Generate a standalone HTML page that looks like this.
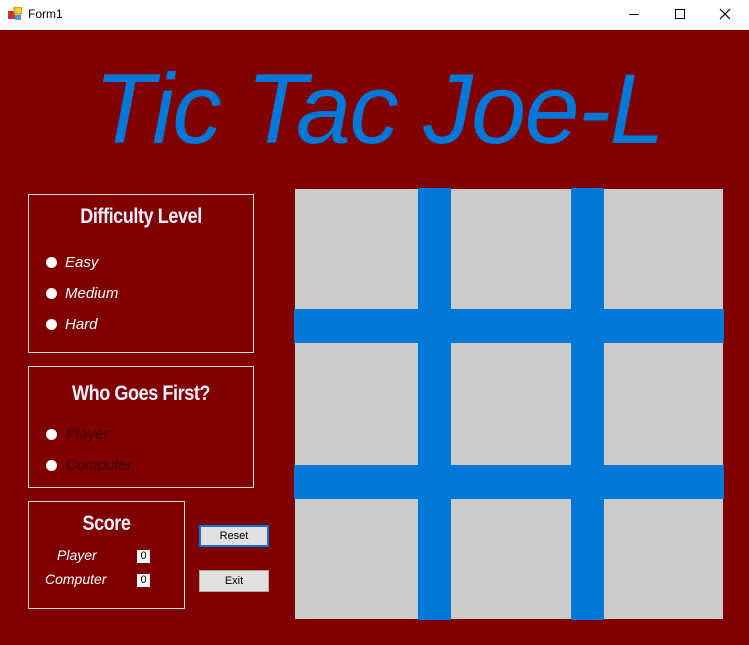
<!DOCTYPE html>
<html><head><style>
body{margin:0;width:749px;height:645px;background:#800000;position:relative;overflow:hidden;font-family:"Liberation Sans",Arial,sans-serif}
.tb{position:absolute;left:0;top:0;width:749px;height:30px;background:#fff}
.a{position:absolute}
.box{position:absolute;border:1px solid #d8d8d8;box-sizing:border-box}
.h{position:absolute;color:#f4f0ff;font-family:"Liberation Sans",sans-serif;font-weight:bold;font-size:21px;text-align:center;width:100%;letter-spacing:-0.5px;transform:scaleX(0.86)}
.rb{position:absolute;width:11px;height:11px;border-radius:50%;background:#fff}
.lbl{position:absolute;font-style:italic;font-size:15px;color:#fff}
.btn{position:absolute;width:70px;height:22px;background:#e1e1e1;box-sizing:border-box;border:1px solid #adadad;font-size:11px;text-align:center;line-height:20px;color:#000}
.g{position:absolute;background:#0078d7}
</style></head><body>
<div class="tb">
<svg class="a" style="left:8px;top:7px" width="14" height="14"><rect x="0" y="4" width="7" height="8" fill="#c33"/><rect x="6" y="0" width="8" height="7" fill="#fc3" stroke="#a80" stroke-width="1"/><rect x="7" y="8" width="6" height="5" fill="#59d"/></svg>
<div class="a" style="left:28px;top:7px;font-size:12px;font-family:'Liberation Sans',sans-serif">Form1</div>
<div class="a" style="left:629px;top:14px;width:10px;height:1px;background:#000"></div>
<div class="a" style="left:675px;top:9px;width:8px;height:8px;border:1px solid #000"></div>
<svg class="a" style="left:719px;top:8px" width="12" height="12"><path d="M1 1L11 11M11 1L1 11" stroke="#000" stroke-width="1.2"/></svg>
</div>
<div class="a" style="left:94px;top:52px;font-size:99px;font-style:italic;color:#0078d7;white-space:nowrap;letter-spacing:-1.6px">Tic Tac Joe-L</div>

<div class="box" style="left:28px;top:194px;width:226px;height:159px">
<div class="h" style="top:10px">Difficulty Level</div>
<div class="rb" style="left:17px;top:62px"></div><div class="lbl" style="left:36px;top:59px">Easy</div>
<div class="rb" style="left:17px;top:93px"></div><div class="lbl" style="left:36px;top:90px">Medium</div>
<div class="rb" style="left:17px;top:124px"></div><div class="lbl" style="left:36px;top:121px">Hard</div>
</div>
<div class="box" style="left:28px;top:366px;width:226px;height:122px">
<div class="h" style="top:15px">Who Goes First?</div>
<div class="rb" style="left:17px;top:62px"></div><div class="lbl" style="left:37px;top:59px;color:#3a0000">Player</div>
<div class="rb" style="left:17px;top:93px"></div><div class="lbl" style="left:37px;top:90px;color:#3a0000">Computer</div>
</div>
<div class="box" style="left:28px;top:501px;width:157px;height:108px">
<div class="h" style="top:10px">Score</div>
<div class="lbl" style="left:28px;top:45px;font-size:14px">Player</div>
<div class="lbl" style="left:16px;top:69px;font-size:14px">Computer</div>
<div class="a" style="left:108px;top:48px;width:13px;height:13px;background:#fff;font-size:11px;text-align:center;line-height:13px">0</div>
<div class="a" style="left:108px;top:72px;width:13px;height:13px;background:#fff;font-size:11px;text-align:center;line-height:13px">0</div>
</div>
<div class="btn" style="left:199px;top:525px;border:2px solid #0078d7;line-height:18px">Reset</div>
<div class="btn" style="left:199px;top:570px">Exit</div>

<div class="a" style="left:295px;top:189px;width:428px;height:430px;background:#cccccc"></div>
<div class="g" style="left:418px;top:188px;width:33px;height:432px"></div>
<div class="g" style="left:571px;top:188px;width:33px;height:432px"></div>
<div class="g" style="left:294px;top:309px;width:430px;height:34px"></div>
<div class="g" style="left:294px;top:465px;width:430px;height:34px"></div>
</body></html>
